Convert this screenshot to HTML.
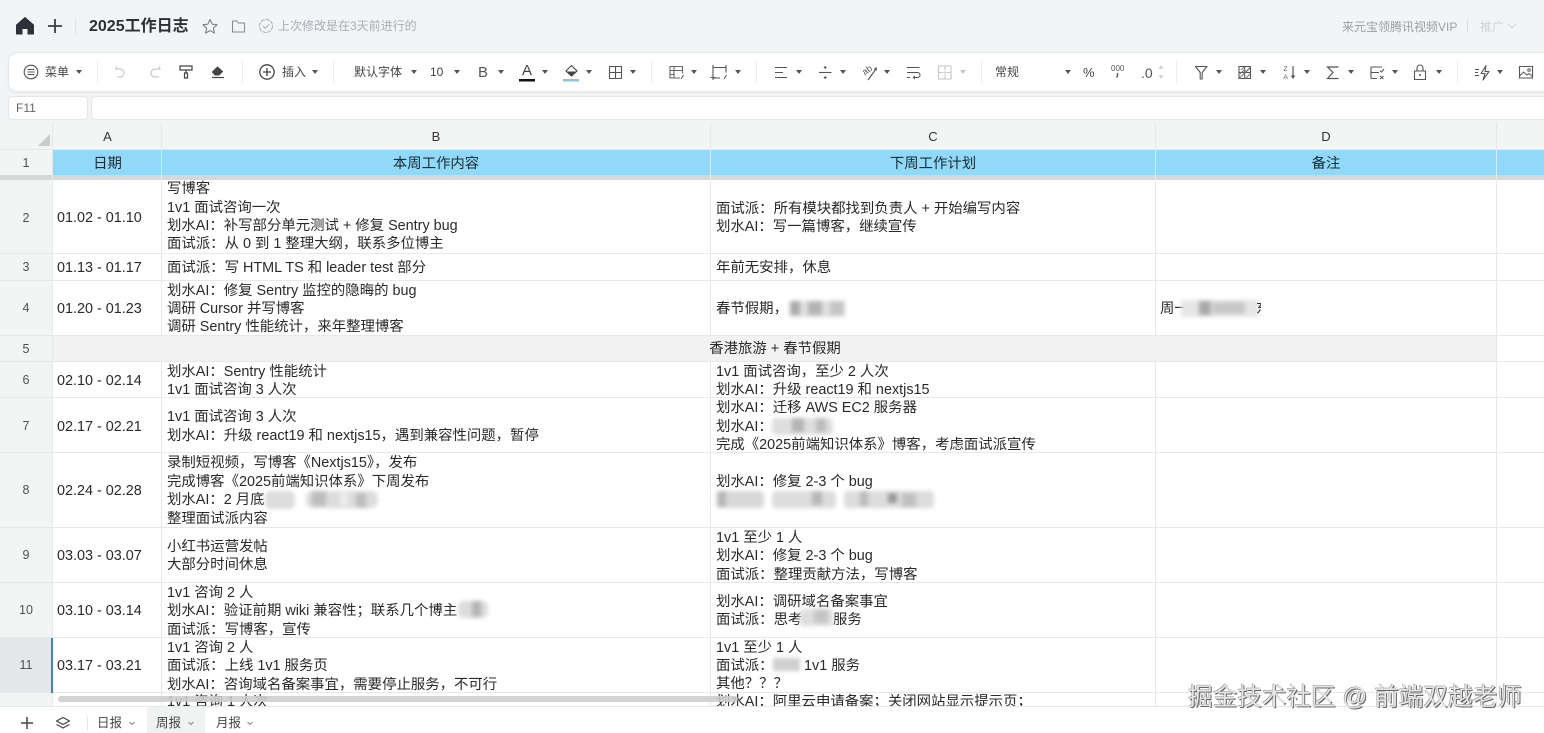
<!DOCTYPE html>
<html lang="zh-CN">
<head>
<meta charset="utf-8">
<title>2025工作日志</title>
<style>
html,body{margin:0;padding:0;width:1544px;height:733px;overflow:hidden;background:#fff}
body{position:relative;font-family:"Liberation Sans","Noto Sans CJK SC",sans-serif;color:#222}
.a{position:absolute}
.l{position:absolute;white-space:nowrap;font-size:14.4px;line-height:18px;color:#2a2a2a;margin-top:1px}
.c{position:absolute;white-space:nowrap;text-align:center;transform:translateX(-50%)}
.h{background:#e6e9e9}
.n{position:absolute;left:0;width:52px;text-align:center;font-size:12.5px;line-height:16px;color:#505050}
.tb{position:absolute;white-space:nowrap;font-size:12px;line-height:16px;color:#444}
.blur{position:absolute;filter:blur(2px);overflow:visible}
.blur i{position:absolute;display:block}
</style>
</head>
<body>
<!-- top bar -->
<div class="a" style="left:0;top:0;width:1544px;height:122px;background:#f3f4f6"></div>
<div class="a" style="left:89px;top:17px;font-size:16px;line-height:20px;font-weight:bold;color:#2b2f36;white-space:nowrap">2025工作日志</div>
<div class="tb" style="left:278px;top:18px;font-size:12px;color:#a9adb2">上次修改是在3天前进行的</div>
<div class="tb" style="left:1342px;top:19px;font-size:12px;color:#9a9da1">来元宝领腾讯视频VIP</div>
<div class="tb" style="left:1480px;top:19px;font-size:12px;color:#cfd1d3">推广</div>

<!-- toolbar -->
<div class="a" style="left:8px;top:52px;width:1560px;height:38px;background:#fff;border:1px solid #e6e7e8;border-radius:9px;box-shadow:0 1px 2px rgba(0,0,0,.05)"></div>
<div class="tb" style="left:45px;top:64px">菜单</div>
<div class="tb" style="left:282px;top:64px">插入</div>
<div class="tb" style="left:354px;top:64px">默认字体</div>
<div class="tb" style="left:430px;top:64px">10</div>
<div class="tb" style="left:478px;top:65px;font-size:15px;color:#555">B</div>
<div class="tb" style="left:522px;top:63px;font-size:15px;color:#444">A</div>
<div class="tb" style="left:995px;top:64px">常规</div>
<div class="tb" style="left:1083px;top:65px;font-size:13px">%</div>
<div class="tb" style="left:1141px;top:65px;font-size:14px;color:#555">.0</div>

<!-- formula bar -->
<div class="a" style="left:8px;top:96px;width:78px;height:22px;background:#fff;border:1px solid #e4e5e6;border-radius:4px"></div>
<div class="tb" style="left:16px;top:100px;font-size:12px;color:#666">F11</div>
<div class="a" style="left:91px;top:96px;width:1470px;height:22px;background:#fff;border:1px solid #e4e5e6;border-radius:4px"></div>

<!-- column header -->
<div class="a" style="left:0;top:122px;width:1544px;height:28px;background:#f3f4f4"></div>
<div class="c" style="left:107.5px;top:129px;font-size:13px;line-height:16px;color:#333">A</div>
<div class="c" style="left:436px;top:129px;font-size:13px;line-height:16px;color:#333">B</div>
<div class="c" style="left:933px;top:129px;font-size:13px;line-height:16px;color:#333">C</div>
<div class="c" style="left:1326px;top:129px;font-size:13px;line-height:16px;color:#333">D</div>

<!-- row headers -->
<div class="a" style="left:0;top:150px;width:52px;height:557px;background:#f3f4f4"></div>
<div class="a" style="left:0;top:638px;width:52px;height:55px;background:#e6e7e8"></div>

<!-- row 1 -->
<div class="a" style="left:53px;top:150px;width:1491px;height:25px;background:#90d9f8"></div>
<div class="a" style="left:0;top:175px;width:1544px;height:5px;background:#d6d7d7"></div>

<!-- row 5 fill -->
<div class="a" style="left:53px;top:336px;width:1443px;height:25px;background:#f2f2f2"></div>

<!-- grid: vertical -->
<div class="a h" style="left:52px;top:122px;width:1px;height:585px"></div>
<div class="a h" style="left:161px;top:122px;width:1px;height:213px"></div>
<div class="a h" style="left:161px;top:361px;width:1px;height:346px"></div>
<div class="a h" style="left:710px;top:122px;width:1px;height:213px"></div>
<div class="a h" style="left:710px;top:361px;width:1px;height:346px"></div>
<div class="a h" style="left:1155px;top:122px;width:1px;height:213px"></div>
<div class="a h" style="left:1155px;top:361px;width:1px;height:346px"></div>
<div class="a h" style="left:1496px;top:122px;width:1px;height:585px"></div>
<div class="a" style="left:161px;top:150px;width:1px;height:25px;background:#cfeefc"></div>
<div class="a" style="left:710px;top:150px;width:1px;height:25px;background:#cfeefc"></div>
<div class="a" style="left:1155px;top:150px;width:1px;height:25px;background:#cfeefc"></div>
<div class="a" style="left:1496px;top:150px;width:1px;height:25px;background:#cfeefc"></div>
<!-- grid: horizontal -->
<div class="a h" style="left:0;top:149px;width:1544px;height:1px"></div>
<div class="a h" style="left:0;top:253px;width:1544px;height:1px"></div>
<div class="a h" style="left:0;top:280px;width:1544px;height:1px"></div>
<div class="a h" style="left:0;top:335px;width:1544px;height:1px"></div>
<div class="a h" style="left:0;top:361px;width:1544px;height:1px"></div>
<div class="a h" style="left:0;top:397px;width:1544px;height:1px"></div>
<div class="a h" style="left:0;top:452px;width:1544px;height:1px"></div>
<div class="a h" style="left:0;top:527px;width:1544px;height:1px"></div>
<div class="a h" style="left:0;top:582px;width:1544px;height:1px"></div>
<div class="a h" style="left:0;top:637px;width:1544px;height:1px"></div>
<div class="a h" style="left:0;top:692px;width:1544px;height:1px"></div>
<div class="a" style="left:51px;top:638px;width:2px;height:55px;background:#3f7fd8"></div>

<!-- row numbers -->
<div class="n" style="top:155px">1</div>
<div class="n" style="top:210px">2</div>
<div class="n" style="top:259px">3</div>
<div class="n" style="top:300px">4</div>
<div class="n" style="top:341px">5</div>
<div class="n" style="top:372px">6</div>
<div class="n" style="top:418px">7</div>
<div class="n" style="top:482px">8</div>
<div class="n" style="top:547px">9</div>
<div class="n" style="top:602px">10</div>
<div class="n" style="top:657px">11</div>

<!-- header row text -->
<div class="c" style="left:107.5px;top:155px;font-size:14.4px;line-height:18px;color:#1c2b33">日期</div>
<div class="c" style="left:436px;top:155px;font-size:14.4px;line-height:18px;color:#1c2b33">本周工作内容</div>
<div class="c" style="left:933px;top:155px;font-size:14.4px;line-height:18px;color:#1c2b33">下周工作计划</div>
<div class="c" style="left:1326px;top:155px;font-size:14.4px;line-height:18px;color:#1c2b33">备注</div>

<!-- col A -->
<div class="l" style="left:57px;top:208px">01.02 - 01.10</div>
<div class="l" style="left:57px;top:258px">01.13 - 01.17</div>
<div class="l" style="left:57px;top:299px">01.20 - 01.23</div>
<div class="l" style="left:57px;top:371px">02.10 - 02.14</div>
<div class="l" style="left:57px;top:417px">02.17 - 02.21</div>
<div class="l" style="left:57px;top:481px">02.24 - 02.28</div>
<div class="l" style="left:57px;top:546px">03.03 - 03.07</div>
<div class="l" style="left:57px;top:601px">03.10 - 03.14</div>
<div class="l" style="left:57px;top:656px">03.17 - 03.21</div>

<!-- col B -->
<div class="l" style="left:167px;top:179px">写博客</div>
<div class="l" style="left:167px;top:198px">1v1 面试咨询一次</div>
<div class="l" style="left:167px;top:216px">划水AI：补写部分单元测试 + 修复 Sentry bug</div>
<div class="l" style="left:167px;top:234px">面试派：从 0 到 1 整理大纲，联系多位博主</div>
<div class="l" style="left:167px;top:258px">面试派：写 HTML TS 和 leader test 部分</div>
<div class="l" style="left:167px;top:281px">划水AI：修复 Sentry 监控的隐晦的 bug</div>
<div class="l" style="left:167px;top:299px">调研 Cursor 并写博客</div>
<div class="l" style="left:167px;top:317px">调研 Sentry 性能统计，来年整理博客</div>
<div class="l" style="left:167px;top:362px">划水AI：Sentry 性能统计</div>
<div class="l" style="left:167px;top:380px">1v1 面试咨询 3 人次</div>
<div class="l" style="left:167px;top:407px">1v1 面试咨询 3 人次</div>
<div class="l" style="left:167px;top:426px">划水AI：升级 react19 和 nextjs15，遇到兼容性问题，暂停</div>
<div class="l" style="left:167px;top:453px">录制短视频，写博客《Nextjs15》，发布</div>
<div class="l" style="left:167px;top:472px">完成博客《2025前端知识体系》下周发布</div>
<div class="l" style="left:167px;top:490px">划水AI：2 月底</div>
<div class="l" style="left:167px;top:509px">整理面试派内容</div>
<div class="l" style="left:167px;top:537px">小红书运营发帖</div>
<div class="l" style="left:167px;top:555px">大部分时间休息</div>
<div class="l" style="left:167px;top:583px">1v1 咨询 2 人</div>
<div class="l" style="left:167px;top:601px">划水AI：验证前期 wiki 兼容性；联系几个博主</div>
<div class="l" style="left:167px;top:620px">面试派：写博客，宣传</div>
<div class="l" style="left:167px;top:638px">1v1 咨询 2 人</div>
<div class="l" style="left:167px;top:656px">面试派：上线 1v1 服务页</div>
<div class="l" style="left:167px;top:675px">划水AI：咨询域名备案事宜，需要停止服务，不可行</div>
<div class="l" style="left:167px;top:692px">1v1 咨询 1 人次</div>

<!-- col C -->
<div class="l" style="left:716px;top:199px">面试派：所有模块都找到负责人 + 开始编写内容</div>
<div class="l" style="left:716px;top:217px">划水AI：写一篇博客，继续宣传</div>
<div class="l" style="left:716px;top:258px">年前无安排，休息</div>
<div class="l" style="left:716px;top:299px">春节假期，</div>
<div class="c" style="left:775px;top:340px;font-size:14.4px;line-height:18px;color:#2a2a2a">香港旅游 + 春节假期</div>
<div class="l" style="left:716px;top:362px">1v1 面试咨询，至少 2 人次</div>
<div class="l" style="left:716px;top:380px">划水AI：升级 react19 和 nextjs15</div>
<div class="l" style="left:716px;top:398px">划水AI：迁移 AWS EC2 服务器</div>
<div class="l" style="left:716px;top:417px">划水AI：</div>
<div class="l" style="left:716px;top:435px">完成《2025前端知识体系》博客，考虑面试派宣传</div>
<div class="l" style="left:716px;top:472px">划水AI：修复 2-3 个 bug</div>
<div class="l" style="left:716px;top:528px">1v1 至少 1 人</div>
<div class="l" style="left:716px;top:546px">划水AI：修复 2-3 个 bug</div>
<div class="l" style="left:716px;top:565px">面试派：整理贡献方法，写博客</div>
<div class="l" style="left:716px;top:592px">划水AI：调研域名备案事宜</div>
<div class="l" style="left:716px;top:610px">面试派：思考</div>
<div class="l" style="left:833px;top:610px">服务</div>
<div class="l" style="left:716px;top:638px">1v1 至少 1 人</div>
<div class="l" style="left:716px;top:656px">面试派：</div>
<div class="l" style="left:804px;top:656px">1v1 服务</div>
<div class="l" style="left:716px;top:674px">其他？？？</div>
<div class="l" style="left:716px;top:692px">划水AI：阿里云申请备案；关闭网站显示提示页；</div>

<!-- col D -->
<div class="l" style="left:1160px;top:299px">周一</div>

<!-- blurred redactions -->
<div class="blur" style="left:790px;top:301px;width:55px;height:16px;background:#e0e0e0"><i style="left:0;top:0;width:10px;height:14px;background:#aaa"></i><i style="left:18px;top:0;width:14px;height:14px;background:#b4b4b4"></i><i style="left:40px;top:0;width:14px;height:14px;background:#c4c4c4"></i></div>
<div class="blur" style="left:1181px;top:300px;width:78px;height:17px;background:#e6e6e6"><i style="left:18px;top:1px;width:12px;height:14px;background:#aaa"></i><i style="left:32px;top:2px;width:32px;height:12px;background:#c8c8c8"></i></div>
<div class="blur" style="left:772px;top:418px;width:61px;height:17px;background:#dedede;border-radius:4px"><i style="left:20px;top:0;width:12px;height:14px;background:#b4b4b4"></i><i style="left:44px;top:0;width:10px;height:14px;background:#bdbdbd"></i></div>
<div class="blur" style="left:716px;top:491px;width:48px;height:17px;background:#d8d8d8;border-radius:4px"><i style="left:2px;top:0;width:8px;height:16px;background:#b6b6b6"></i></div>
<div class="blur" style="left:772px;top:491px;width:64px;height:17px;background:#dcdcdc;border-radius:4px"><i style="left:40px;top:0;width:10px;height:14px;background:#b8b8b8"></i></div>
<div class="blur" style="left:844px;top:491px;width:90px;height:17px;background:#dcdcdc;border-radius:4px"><i style="left:16px;top:0;width:8px;height:15px;background:#bbb"></i><i style="left:44px;top:2px;width:9px;height:10px;background:#999"></i><i style="left:58px;top:2px;width:14px;height:14px;background:#c0c0c0"></i></div>
<div class="blur" style="left:265px;top:491px;width:30px;height:18px;background:#dcdcdc;border-radius:6px"></div>
<div class="blur" style="left:306px;top:491px;width:72px;height:17px;background:#dcdcdc;border-radius:7px"><i style="left:6px;top:0;width:14px;height:15px;background:#bdbdbd"></i><i style="left:34px;top:2px;width:8px;height:12px;background:#eee"></i><i style="left:50px;top:2px;width:10px;height:15px;background:#bdbdbd"></i></div>
<div class="blur" style="left:458px;top:601px;width:30px;height:17px;background:#dcdcdc;border-radius:6px"><i style="left:14px;top:0;width:9px;height:16px;background:#b4b4b4"></i></div>
<div class="blur" style="left:800px;top:609px;width:33px;height:17px;background:#dedede"><i style="left:14px;top:0;width:14px;height:14px;background:#c4c4c4"></i></div>
<div class="blur" style="left:773px;top:658px;width:27px;height:13px;background:#cfcfcf"></div>
<div class="l" style="left:1256px;top:299px;width:5px;overflow:hidden">东</div>

<!-- scrollbar -->
<div class="a" style="left:58px;top:696px;width:680px;height:6px;background:rgba(205,205,205,.88);border-radius:3px"></div>

<!-- sheet bar -->
<div class="a" style="left:0;top:706px;width:1544px;height:27px;background:#fff;border-top:1px solid #e6e9e9;box-sizing:border-box"></div>
<div class="a" style="left:147px;top:707px;width:58px;height:26px;background:#f1f2f2"></div>
<div class="tb" style="left:97px;top:715px;font-size:12.5px">日报</div>
<div class="tb" style="left:156px;top:715px;font-size:12.5px">周报</div>
<div class="tb" style="left:216px;top:715px;font-size:12.5px">月报</div>

<!-- watermark -->
<div class="a" style="left:1188px;top:683px;font-size:24.6px;line-height:30px;white-space:nowrap;color:#e6e6e6;text-shadow:1px 1px 0 #666,-.5px -.5px 0 #8a8a8a">掘金技术社区 @ 前端双越老师</div>

<!-- icons -->
<svg class="a" style="left:0;top:0" width="1544" height="733" viewBox="0 0 1544 733" fill="none">
  <!-- top bar -->
  <path d="M25 17.5 L33.5 25 V34 H28 V28.5 H22 V34 H16.5 V25 Z" fill="#2d323a" stroke="#2d323a" stroke-width="1" stroke-linejoin="round"/>
  <path d="M55 19 V33 M48 26 H62" stroke="#3a3e45" stroke-width="1.8"/>
  <path d="M75.5 18 V34" stroke="#e3e4e6"/>
  <path d="M210 19.5 l2.1 4.6 5 .6 -3.7 3.4 1 5 -4.4-2.5 -4.4 2.5 1-5 -3.7-3.4 5-.6 Z" stroke="#777" stroke-width="1" stroke-linejoin="round"/>
  <path d="M232.5 21 h4.5 l1.6 2 h6 v9 h-12.1 Z" stroke="#888" stroke-width="1" stroke-linejoin="round"/>
  <circle cx="266" cy="26" r="6.5" stroke="#a8acb0" stroke-dasharray="4 1" />
  <path d="M263 26 l2.3 2.3 4-4" stroke="#a8acb0"/>
  <path d="M1467.5 20 V32" stroke="#dcdddf"/>
  <path d="M1508 24 l4 4 4-4" stroke="#d4d5d7"/>

  <!-- toolbar: dividers -->
  <path d="M97.5 61 V83 M242.5 61 V83 M333.5 61 V83 M651.5 61 V83 M756.5 61 V83 M981.5 61 V83 M1176.5 61 V83 M1457.5 61 V83" stroke="#ebecec"/>

  <!-- carets -->
  <g fill="#555">
    <path d="M76 70 h6 l-3 4z M312 70 h6 l-3 4z M411 70 h6 l-3 4z M454 70 h6 l-3 4z M498 70 h6 l-3 4z M542 70 h6 l-3 4z M586 70 h6 l-3 4z M630 70 h6 l-3 4z M691 70 h6 l-3 4z M735 70 h6 l-3 4z M796 70 h6 l-3 4z M840 70 h6 l-3 4z M884 70 h6 l-3 4z M1065 70 h6 l-3 4z M1216 70 h6 l-3 4z M1260 70 h6 l-3 4z M1304 70 h6 l-3 4z M1348 70 h6 l-3 4z M1392 70 h6 l-3 4z M1436 70 h6 l-3 4z M1497 70 h6 l-3 4z"/>
    <path d="M960 70 h6 l-3 4z" fill="#c4c6c8"/>
  </g>

  <!-- menu -->
  <circle cx="31" cy="72" r="6.8" stroke="#555" stroke-width="1.1"/>
  <path d="M27.5 69.5 h7 M27.5 72 h7 M27.5 74.5 h7" stroke="#555"/>
  <!-- undo / redo -->
  <path d="M117 66.5 l-1.5 2.5 h4.5 a4 4 0 0 1 0 8 h-3" stroke="#c8cacc" stroke-width="1.2"/>
  <path d="M159 66.5 l1 2.5 h-5 a4 4 0 0 0 0 8 h4" stroke="#c8cacc" stroke-width="1.2"/>
  <!-- paint roller -->
  <path d="M180 66 h12 v4 h-12 Z M186 70 v3 M184.500 73 h3 v5 h-3 Z" stroke="#444" stroke-width="1.2"/>
  <!-- eraser -->
  <path d="M212.5 72 l5-5 5 4.5 -3.5 3.5 h-4 Z" fill="#444" stroke="#444" stroke-linejoin="round"/>
  <path d="M212 77.5 h12" stroke="#444" stroke-width="1.2"/>
  <!-- insert -->
  <circle cx="267" cy="72" r="7.2" stroke="#444" stroke-width="1.3"/>
  <path d="M267 68 v8 M263 72 h8" stroke="#444" stroke-width="1.3"/>
  <!-- font color bar -->
  <rect x="519" y="79" width="16" height="2.5" fill="#111"/>
  <!-- fill color -->
  <path d="M571.5 65.5 l5.5 5.5 -5.5 5 -5.5-5 Z" stroke="#444" stroke-width="1.1"/>
  <path d="M566 71.5 h11 l-5.5 4.7 Z" fill="#444"/>
  <rect x="563" y="79" width="16" height="2.5" fill="#8cc6da"/>
  <!-- borders -->
  <path d="M609.5 66.5 h12 v12 h-12 Z M615.5 66.5 v12 M609.5 72.5 h12" stroke="#555" stroke-width="1.1"/>
  <!-- cell style -->
  <path d="M680 78 h-10 v-11.500 h12.500 v7 M670 70.500 h12.500 M674 66.500 v11.500 M670 74.500 h4" stroke="#666" stroke-width="1.1"/>
  <path d="M681 79 l2.500-4" stroke="#555"/>
  <!-- crop -->
  <path d="M713 67.500 h13 M713 67.500 v10 M713 78 h7 M726 67.500 v5 M713 65 v15 M710.500 77.500 h5 M726 65 v5" stroke="#555" stroke-width="1.1"/>
  <path d="M724 79 l2.500-4" stroke="#555"/>
  <!-- align -->
  <path d="M775 67.500 h12 M775 72.500 h8 M775 77.500 h12" stroke="#555" stroke-width="1.1"/>
  <!-- valign -->
  <path d="M819 72.500 h12.500" stroke="#555" stroke-width="1.1"/>
  <path d="M825.200 66 v3 M825.200 76 v3" stroke="#555"/>
  <path d="M823.500 68 h3.500 l-1.800-2 Z M823.500 77 h3.500 l-1.800 2 Z" fill="#555"/>
  <!-- rotate -->
  <text x="862" y="73" font-size="9" fill="#555" transform="rotate(-35 867 70)">ab</text>
  <path d="M868 80 l8-11" stroke="#555" stroke-width="1.1"/>
  <path d="M877 67 l-.5 4 -3-2 Z" fill="#555"/>
  <!-- wrap -->
  <path d="M907 67.500 h12.500 M907 72.500 h10.500 a2.500 2.500 0 0 1 0 5 h-3 M907 77.500 h3" stroke="#555" stroke-width="1.1"/>
  <path d="M915 75.500 v4 l-2.500-2 Z" fill="#555"/>
  <!-- merge -->
  <path d="M938.500 66 h12.500 v13 h-12.500 Z M945 66 v4 M945 75 v4 M938.500 72.500 h4 M947 72.500 h4" stroke="#c4c6c8" stroke-width="1.100"/>
  <path d="M942 72.500 h6 M945 70.500 v4" stroke="#d0d2d4"/>
  <!-- thousands -->
  <text x="1111" y="71" font-size="8" fill="#555" font-family="Liberation Sans">000</text>
  <path d="M1117.500 73 v3 l-1 1.500" stroke="#555" stroke-width="1.4"/>
  <!-- spinner -->
  <path d="M1158.500 68.500 l2.500-3 2.500 3 Z" fill="#c4c6c8"/>
  <path d="M1158.500 75.500 l2.500 3 2.500-3 Z" fill="#c4c6c8"/>
  <!-- filter -->
  <path d="M1195.500 66.500 h11.500 l-4.800 6 v6.500 h-2 v-6.500 Z" stroke="#555" stroke-width="1.100" stroke-linejoin="round"/>
  <!-- conditional -->
  <path d="M1239 66.500 h11.500 v12 h-11.500 Z M1244.700 66.500 v12 M1239 72.500 h11.500" stroke="#555" stroke-width="1.100"/>
  <path d="M1239.500 78 l11-11 M1241 70 l3-3 M1246 78 l4-4 M1240 74 l4-4 M1246 72 l4-4" stroke="#777"/>
  <!-- sort -->
  <text x="1283.500" y="71" font-size="6.500" fill="#555">Z</text>
  <text x="1283.500" y="79" font-size="6.500" fill="#555">A</text>
  <path d="M1293 66 v12" stroke="#555" stroke-width="1.200"/>
  <path d="M1290.700 75.500 h4.600 l-2.300 3.500 Z" fill="#555"/>
  <!-- sigma -->
  <path d="M1338.500 67 h-11 l5.500 5.500 -5.500 6 h11" stroke="#555" stroke-width="1.200"/>
  <!-- data tools -->
  <path d="M1371 67 h11 M1371 67 v11.500 M1371 72.500 h8 M1371 78.500 h6" stroke="#555" stroke-width="1.100"/>
  <path d="M1380 70.500 l1.500 1.500 2.500-3 M1380 76 l3.500 3 M1383.500 76 l-3.500 3" stroke="#555"/>
  <!-- lock -->
  <path d="M1414.500 71 h11 v8.500 h-11 Z M1417 71 v-3 a3 3 0 0 1 6 0 v3" stroke="#555" stroke-width="1.100"/>
  <circle cx="1420" cy="75" r="1" fill="#555"/>
  <!-- flash -->
  <path d="M1475 69.500 h4 M1475 72.500 h3 M1475 75.500 h4" stroke="#555" stroke-width="1.100"/>
  <path d="M1486 65.500 l-5 8 h4 l-2 6.500 6-8.500 h-4 Z" stroke="#555" stroke-width="1.100" stroke-linejoin="round"/>
  <!-- image -->
  <path d="M1519.500 66.500 h13 v11.500 h-13 Z" stroke="#555" stroke-width="1.100"/>
  <path d="M1519.500 76 l4-4 3.500 3 2-1.500 3.500 3" stroke="#555"/>
  <circle cx="1529" cy="70" r="1.300" stroke="#555"/>
  <!-- corner -->
  <path d="M50 134 V146 H38 Z" fill="#c9cccc"/>
  <!-- sheet bar -->
  <path d="M27 717 v12 M21 723 h12" stroke="#444" stroke-width="1.500"/>
  <path d="M63 717.500 l6.500 3.500 -6.500 3.500 -6.500-3.500 Z" stroke="#444" stroke-width="1.200" stroke-linejoin="round"/>
  <path d="M56.500 724.500 l6.500 3.500 6.500-3.500" stroke="#444" stroke-width="1.200"/>
  <path d="M87.500 717 v13" stroke="#e4e5e6"/>
  <path d="M129.500 722 l2.500 2.500 2.500-2.500 M188.500 722 l2.500 2.500 2.500-2.500 M247.500 722 l2.500 2.500 2.500-2.500" stroke="#888"/>
</svg>
</body>
</html>
